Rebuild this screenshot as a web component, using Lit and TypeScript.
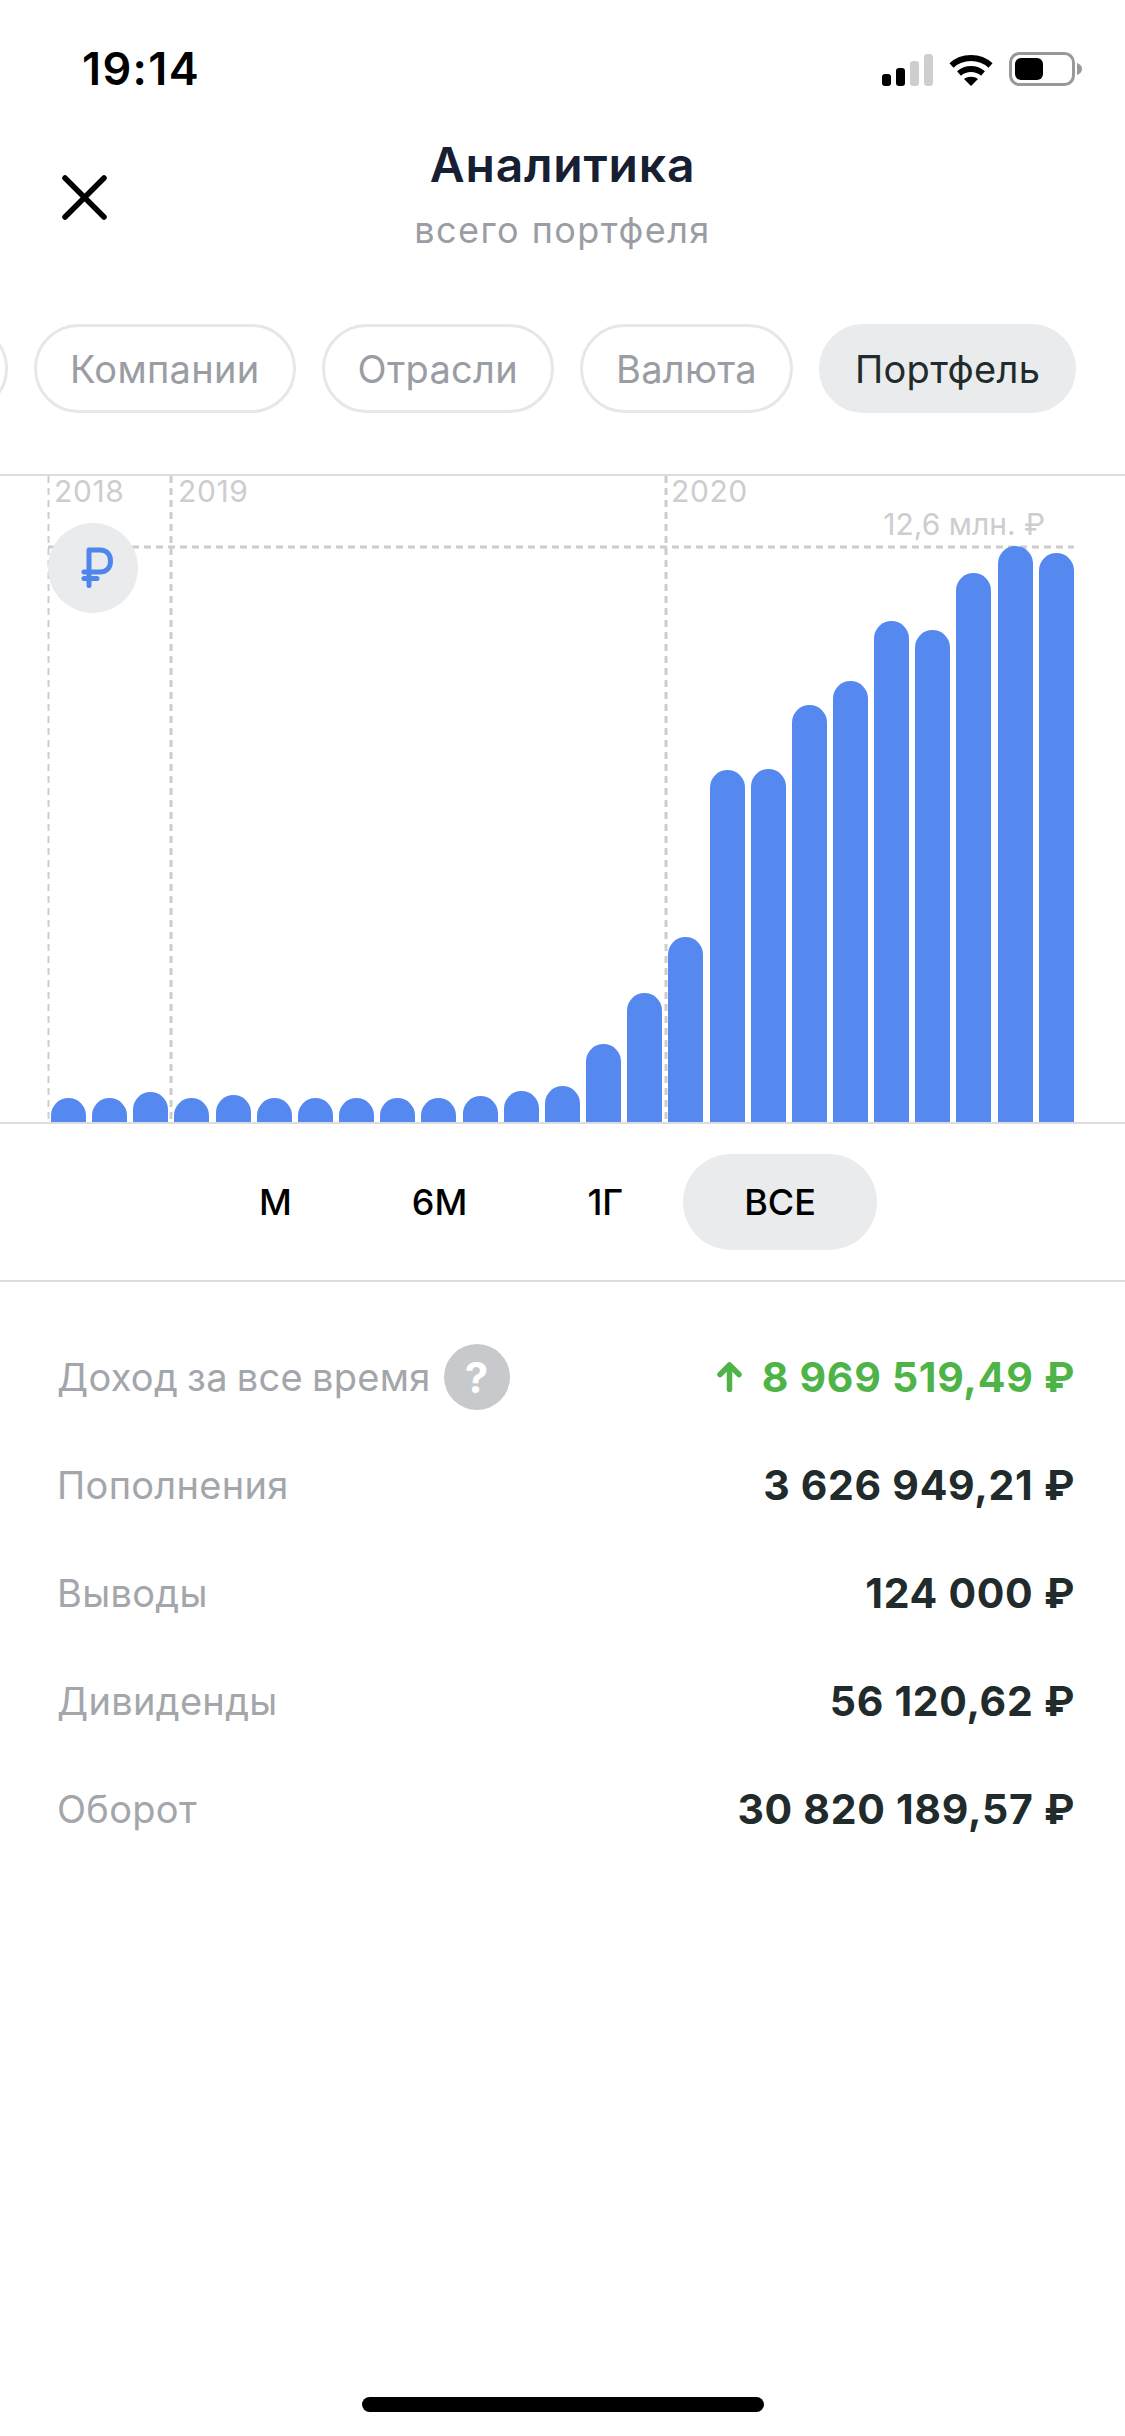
import { LitElement, html, css, svg } from "lit";
import { customElement } from "lit/decorators.js";

const TOPS = [1099,1099,1093,1099,1096,1099,1099,1099,1099,1099,1097,1092,1087,1045,994,938,771,770,706,682,622,631,574,547,554];
const BASE = 1123;
const CHIPS = ["Компании","Отрасли","Валюта","Портфель"];
const PERIODS = ["М","6М","1Г","ВСЕ"];
const ROWS = [
  ["Пополнения","3 626 949,21 ₽"],
  ["Выводы","124 000 ₽"],
  ["Дивиденды","56 120,62 ₽"],
  ["Оборот","30 820 189,57 ₽"],
];

@customElement("app-root")
export class AppRoot extends LitElement {
  static styles = css`
    :host { display: block; width: 1125px; background: #fff; font-family: Inter, "Noto Sans", sans-serif; }
    .page { display: flex; flex-direction: column; min-height: 2436px; overflow: hidden; }
    .status { box-sizing: border-box; height: 100px; padding: 38px 43px 0 82px; display: flex; align-items: center; justify-content: space-between; }
    .time { font-size: 45px; font-weight: 600; color: #000; letter-spacing: 1.4px; line-height: 62px; }
    .status-icons { display: flex; align-items: center; gap: 16px; }
    .status-icons svg { display: block; }
    .header { display: grid; grid-template-columns: 1fr auto 1fr; padding-top: 36px; }
    .close { display: block; margin: 37px 0 0 60px; }
    .title-block { text-align: center; }
    .title { font-size: 48px; line-height: 58px; font-weight: 600; color: #172033; letter-spacing: 0.8px; }
    .subtitle { font-size: 36px; line-height: 44px; margin-top: 14px; color: #9a9da3; letter-spacing: 1.45px; }
    .chips { display: flex; gap: 26px; margin: 72px 0 0 -192px; }
    .chip { box-sizing: border-box; flex: none; height: 89px; padding: 0 33px; border: 3px solid #e5e7e9; border-radius: 45px; display: flex; align-items: center; font-size: 38px; letter-spacing: 0.3px; color: #9a9da3; }
    .chip.edge { width: 200px; }
    .chip.on { background: #e9ebec; border-color: #e9ebec; color: #212b2b; }
    .chart { position: relative; box-sizing: border-box; height: 650px; margin-top: 61px; border-top: 2px solid #dcdcde; border-bottom: 2px solid #dcdcde; display: flex; align-items: flex-end; gap: 6.17px; padding-left: 51px; }
    .grid { position: absolute; left: 0; top: -2px; width: 1125px; height: 650px; }
    .bar { position: relative; flex: none; width: 35px; background: #5589ef; border-radius: 17.5px 17.5px 0 0; }
    .year, .max { position: absolute; font-size: 30px; line-height: 36px; color: #cdcdcf; }
    .year { top: -3px; letter-spacing: 0.6px; }
    .max { top: 30px; right: 80px; }
    .cur { position: absolute; left: 48px; top: 47px; width: 90px; height: 90px; border-radius: 50%; background: #e9ebec; display: flex; }
    .periods { box-sizing: border-box; height: 158px; padding: 30px 0 0 199px; border-bottom: 2px solid #dcdcde; display: flex; align-items: flex-start; }
    .period { height: 96px; padding: 0 60px; border-radius: 48px; display: flex; align-items: center; font-size: 36px; font-weight: 500; color: #000; }
    .period.on { background: #e9ebec; padding: 0 61px; }
    .stats { padding: 41px 50px 0 57px; }
    .row { height: 108px; display: flex; align-items: center; justify-content: space-between; }
    .label { font-size: 38px; letter-spacing: 0.3px; word-spacing: -2px; color: #a3a6aa; display: flex; align-items: center; gap: 13px; }
    .q { width: 66px; height: 66px; border-radius: 50%; background: #c8c9cc; color: #fff; font-size: 42px; font-weight: 700; display: flex; align-items: center; justify-content: center; }
    .value { font-size: 41px; font-weight: 700; color: #212b2b; letter-spacing: 0.7px; display: flex; align-items: center; gap: 20px; }
    .value.up { color: #4fb448; }
    .home { width: 402px; height: 15px; border-radius: 8px; background: #000; margin: auto auto 24px; }
  `;

  private vline(x: number, w: number) {
    return svg`<line x1=${x} x2=${x} y1="2" y2="648" stroke="#cdcdcf" stroke-width=${w} stroke-dasharray="7 5"></line>`;
  }

  render() {
    return html`<div class="page">
      <div class="status">
        <span class="time">19:14</span>
        <div class="status-icons">
          <svg width="51" height="33" viewBox="0 0 51 33">
            <rect x="0" y="21" width="9" height="12" rx="3" fill="#000"></rect>
            <rect x="14" y="15" width="9" height="18" rx="3" fill="#000"></rect>
            <rect x="28" y="8" width="9" height="25" rx="3" fill="#cecece"></rect>
            <rect x="42" y="1" width="9" height="32" rx="3" fill="#cecece"></rect>
          </svg>
          <svg width="44" height="33" viewBox="0 0 44 33">
            <path d="M2.5 12.5C13 2.5 31 2.5 41.5 12.5" fill="none" stroke="#000" stroke-width="6"></path>
            <path d="M10 20.5C17 14.5 27 14.5 34 20.5" fill="none" stroke="#000" stroke-width="6"></path>
            <path d="M22 33L15 26C19 23 25 23 29 26Z" fill="#000"></path>
          </svg>
          <svg width="73" height="34" viewBox="0 0 73 34">
            <rect x="1.5" y="1.5" width="63" height="31" rx="9" fill="none" stroke="#999" stroke-width="3"></rect>
            <rect x="6" y="6" width="28" height="22" rx="6" fill="#000"></rect>
            <path d="M68 11C71 12 73 14 73 17C73 20 71 22 68 23Z" fill="#999"></path>
          </svg>
        </div>
      </div>

      <div class="header">
        <svg class="close" width="50" height="50" viewBox="0 0 50 50">
          <path d="M5 5L44 44M44 5L5 44" fill="none" stroke="#000" stroke-width="5.5" stroke-linecap="round"></path>
        </svg>
        <div class="title-block">
          <div class="title">Аналитика</div>
          <div class="subtitle">всего портфеля</div>
        </div>
      </div>

      <div class="chips">
        <div class="chip edge"></div>
        ${CHIPS.map((c) => html`<div class="chip ${c === "Портфель" ? "on" : ""}">${c}</div>`)}
      </div>

      <div class="chart">
        <svg class="grid" viewBox="0 0 1125 650">
          ${this.vline(48.5, 2)}
          ${this.vline(171, 3)}
          ${this.vline(666, 3)}
          <line x1="48" x2="1074" y1="73" y2="73" stroke="#cdcdcf" stroke-width="3" stroke-dasharray="7 5"></line>
        </svg>
        <span class="year" style="left:54px">2018</span>
        <span class="year" style="left:178px">2019</span>
        <span class="year" style="left:671px">2020</span>
        <span class="max">12,6 млн. ₽</span>
        <div class="cur">
          <svg width="90" height="90" viewBox="0 0 90 90">
            <path d="M41 62.5V27H52C59 27 62.5 32 62.5 38C62.5 44.5 59 49 52 49H36M36 55.5H49" fill="none" stroke="#4f86ec" stroke-width="5" stroke-linecap="round" stroke-linejoin="round"></path>
          </svg>
        </div>
        ${TOPS.map((t) => html`<div class="bar" style="height:${BASE - t}px"></div>`)}
      </div>

      <div class="periods">
        ${PERIODS.map((p) => html`<div class="period ${p === "ВСЕ" ? "on" : ""}">${p}</div>`)}
      </div>

      <div class="stats">
        <div class="row">
          <div class="label">Доход за все время <span class="q">?</span></div>
          <div class="value up">
            <svg width="25" height="30" viewBox="0 0 25 30">
              <path d="M12.5 27.5V3M3 12.5L12.5 3L22 12.5" fill="none" stroke="#4fb448" stroke-width="5.5" stroke-linecap="round" stroke-linejoin="round"></path>
            </svg>
            <span>8 969 519,49 ₽</span>
          </div>
        </div>
        ${ROWS.map(([l, v]) => html`<div class="row"><div class="label">${l}</div><div class="value">${v}</div></div>`)}
      </div>

      <div class="home"></div>
    </div>`;
  }
}
